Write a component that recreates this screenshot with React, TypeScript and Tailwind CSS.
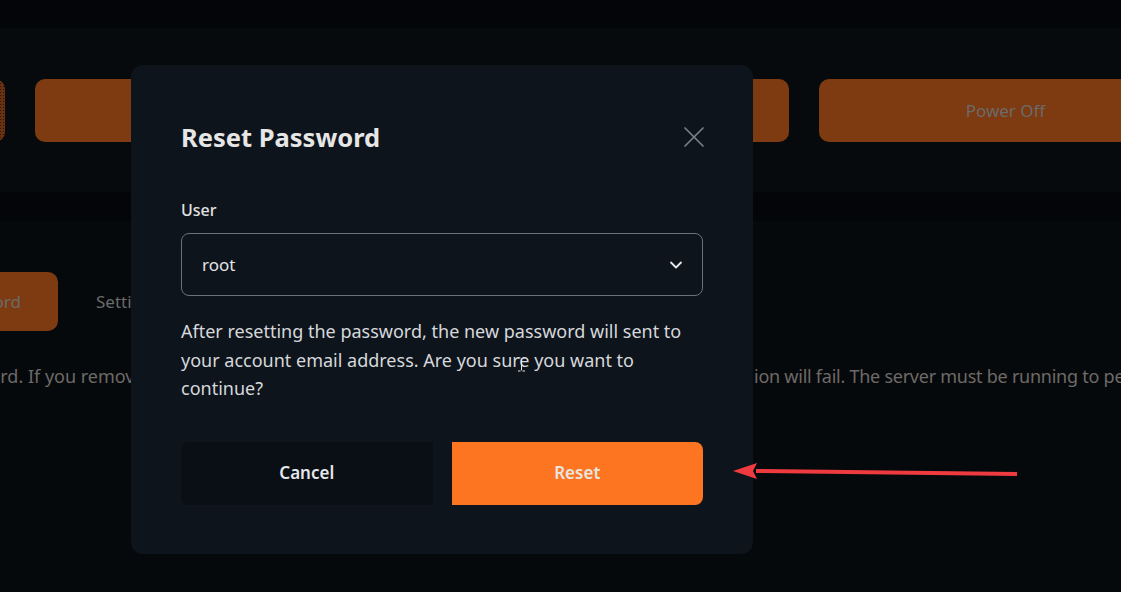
import { ChevronDown, X } from "lucide-react";

/**
 * Diálogo de redefinição de senha sobre o painel do servidor.
 */
export default function App() {
  return (
    <div className="relative h-[592px] w-[1121px] overflow-hidden bg-[#06090c] font-['Noto_Sans',sans-serif]">
      {/* Faixa superior */}
      <div className="h-[28px] bg-[#030508]" />

      {/* Painel de ações */}
      <div className="flex h-[164px] items-start gap-[30px] overflow-hidden bg-[#070a0d] pt-[51px]">
        <div className="ml-[-55px] h-[63px] w-[60px] shrink-0 rounded-[10px] bg-[#6a3110] bg-[radial-gradient(#2b1607_0.8px,transparent_0.9px)] bg-[length:3px_3px]" />
        <div className="h-[63px] w-[362px] shrink-0 rounded-[10px] bg-[#7e3a10]" />
        <div className="h-[63px] w-[362px] shrink-0 rounded-[10px] bg-[#7e3a10]" />
        <div className="flex h-[63px] w-[373px] shrink-0 items-center justify-center rounded-[10px] bg-[#7e3a10] text-[17px] text-[#6b6b6b]">
          Power Off
        </div>
      </div>

      <div className="h-[29px] bg-[#030508]" />

      {/* Abas e descrição */}
      <div className="pt-[51px]">
        <div className="flex items-center gap-[38px]">
          <div className="ml-[-142px] flex h-[59px] w-[200px] shrink-0 items-center justify-end rounded-[10px] bg-[#7e3a10] pr-[37px] text-[17px] text-[#6b6b6b]">
            Password
          </div>
          <span className="text-[17px] text-[#6b6b6b]">Settings</span>
        </div>
        <div className="mt-[31px] flex whitespace-nowrap text-[18px] leading-[28px] text-[#6e6a66]">
          <div className="w-[754px] shrink-0 overflow-hidden">
            <span className="ml-[-63px] inline-block">Password. If you remove the email address, the reset operat</span>
          </div>
          <span className="tracking-[-0.25px]">ion will fail. The server must be running to perform this action.</span>
        </div>
      </div>

      {/* Modal */}
      <div className="absolute left-[131px] top-[65px] flex h-[489px] w-[622px] flex-col rounded-[12px] bg-[#0e141b] px-[50px] pt-[54px]">
        <div className="flex items-center justify-between">
          <h2 className="text-[25.5px] font-bold leading-[36px] text-[#e6e6e6]">Reset Password</h2>
          <X className="mr-[-9px] h-[36px] w-[36px] text-[#7b8189]" strokeWidth={1.1} />
        </div>

        <label className="mt-[44px] text-[16px] font-medium leading-[22px] text-[#e2e2e2]">User</label>
        <div className="mt-[12px] flex h-[63px] items-center justify-between rounded-[8px] border border-[#6b7178] pl-[20px] pr-[16px]">
          <span className="text-[17px] text-[#e2e4e6]">root</span>
          <ChevronDown className="h-[20px] w-[20px] text-[#e5e7eb]" strokeWidth={2.2} />
        </div>

        <p className="relative mt-[21px] text-[18px] leading-[28.5px] text-[#d6d8db]">
          After resetting the password, the new password will sent to your account email address. Are you sure you want to
          continue?
          <svg className="absolute left-[336px] top-[40px]" width="9" height="15" viewBox="0 0 9 15">
            <path d="M1 1h2.5M5.5 1H8M4.5 1.5v12M1 14h2.5M5.5 14H8" stroke="#e8e8e8" strokeWidth="1" fill="none" />
          </svg>
        </p>

        <div className="mt-[39px] flex gap-[19px]">
          <button className="h-[63px] flex-1 rounded-l-[8px] bg-[#0a0e15] text-[17px] font-semibold text-[#e5e7eb]">
            Cancel
          </button>
          <button className="h-[63px] flex-1 rounded-r-[8px] bg-[#fd7520] text-[17px] font-semibold text-[#e8e4e0]">
            Reset
          </button>
        </div>
      </div>

      {/* Seta de anotação */}
      <svg className="absolute left-[730px] top-[460px]" width="292" height="24" viewBox="0 0 292 24">
        <path d="M26 11 L287 14" stroke="#ef3b3f" strokeWidth="4" />
        <path d="M3 11 L27 3 L23 11 L27 19 Z" fill="#ef3b3f" />
      </svg>
    </div>
  );
}
